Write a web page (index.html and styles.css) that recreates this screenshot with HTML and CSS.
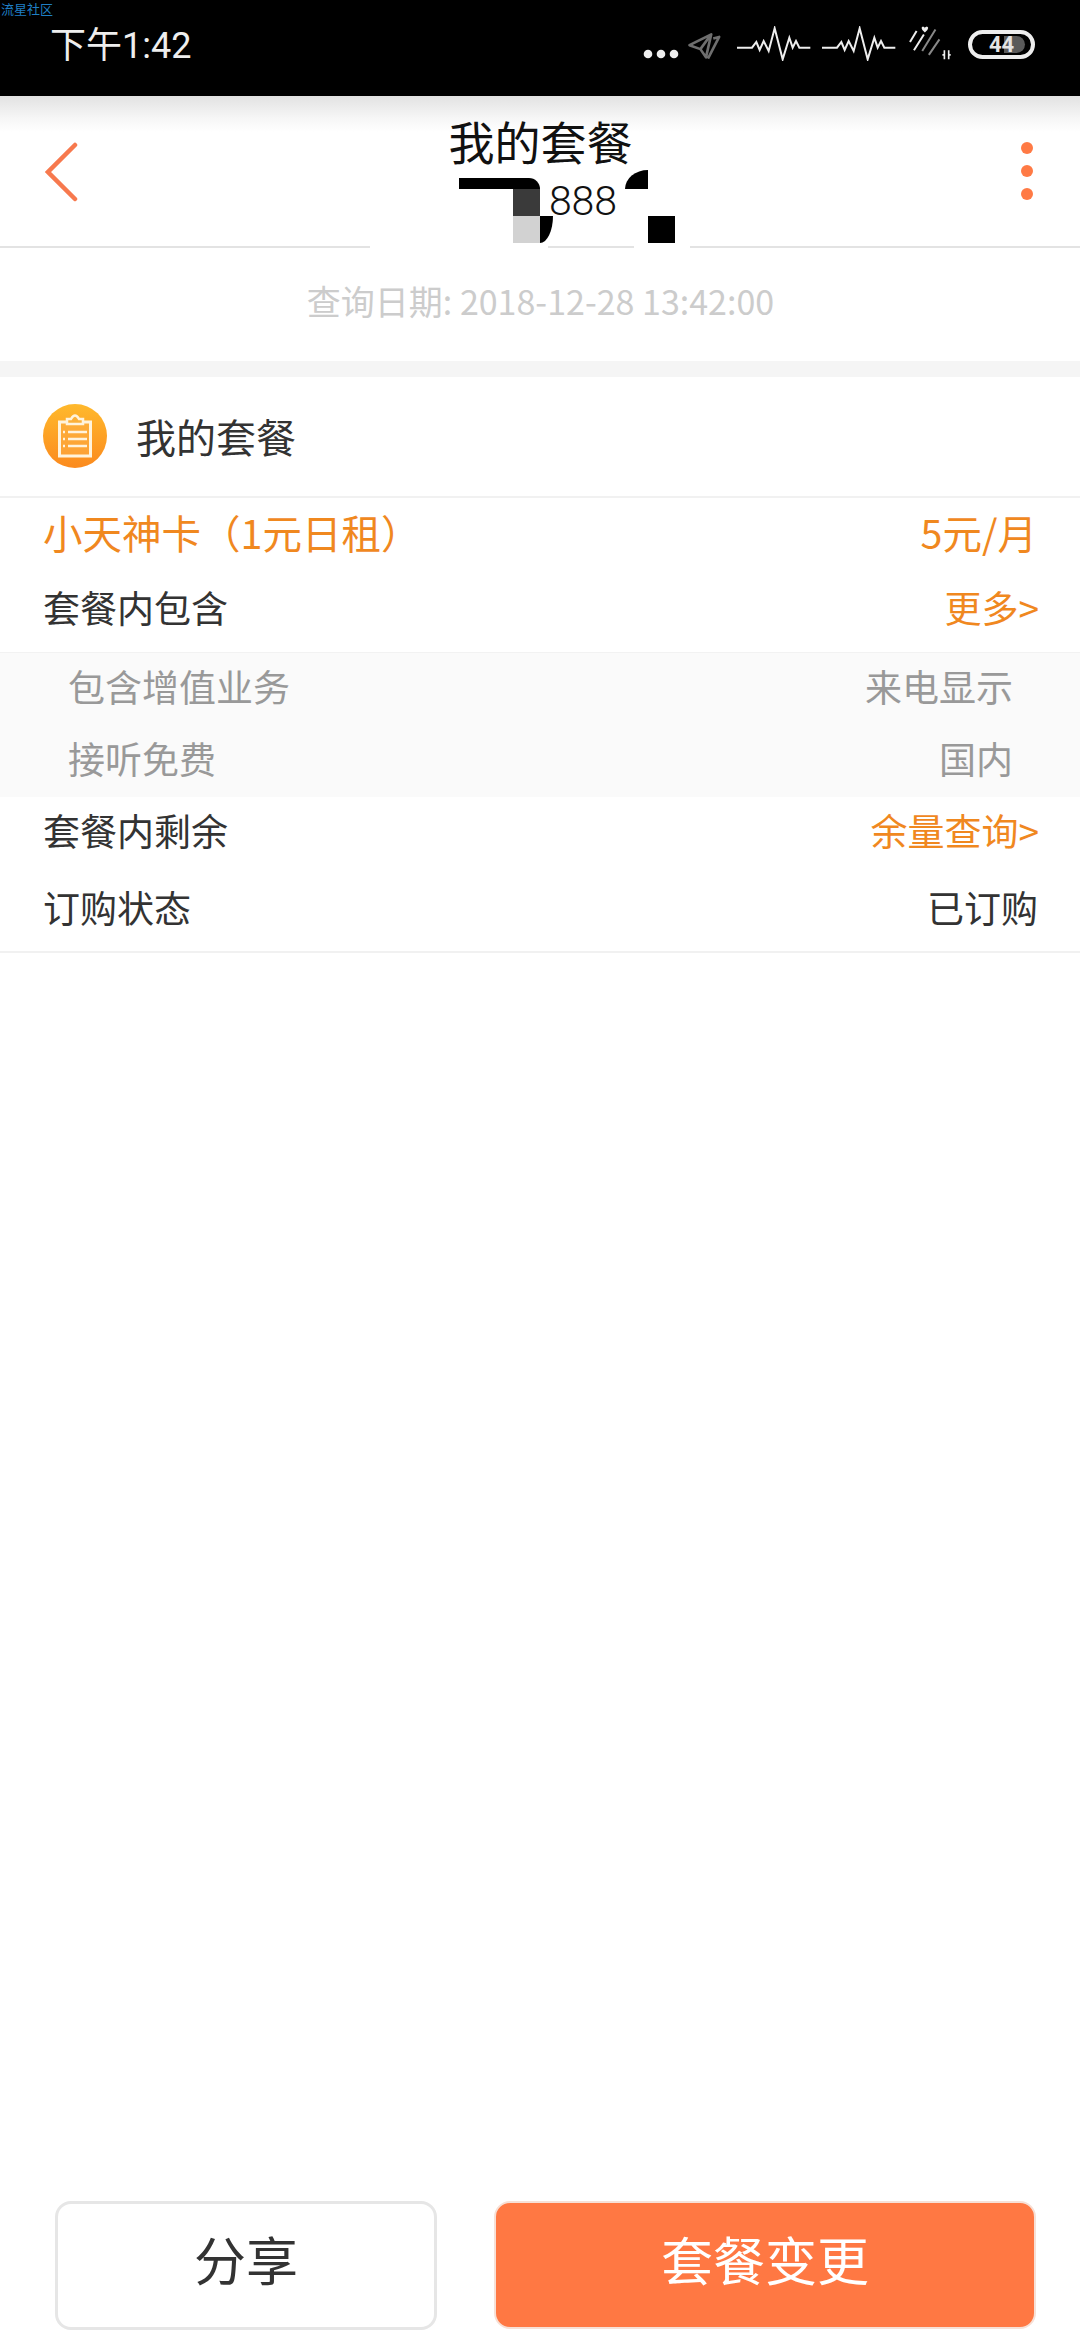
FILE: index.html
```html
<!DOCTYPE html>
<html lang="zh-CN">
<head>
<meta charset="utf-8">
<title>我的套餐</title>
<link rel="stylesheet" href="styles.css">
</head>
<body>
<div class="page">
  <header class="status">
    <span class="watermark">流星社区</span>
    <span class="time">下午1:42</span>
    <div class="status-icons">
      <svg class="i-dots" viewBox="0 0 36 10"><circle cx="5" cy="5" r="4.3"/><circle cx="18" cy="5" r="4.3"/><circle cx="31" cy="5" r="4.3"/></svg>
      <svg class="i-send" viewBox="205 95 105 85"><path d="M212 135L278 102L262 172L245 147Z M245 147L278 102 M284 115L302 110L268 176" fill="none" stroke="#6e6e6e" stroke-width="8" stroke-linejoin="round"/></svg>
      <svg class="i-wave" viewBox="350 80 225 105"><path d="M350 145H395L408 128L418 152L430 125L445 155L463 87L487 180L507 115L517 145L527 125L537 145H570"/></svg>
      <svg class="i-wave" viewBox="350 80 225 105"><path d="M350 145H395L408 128L418 152L430 125L445 155L463 87L487 180L507 115L517 145L527 125L537 145H570"/></svg>
      <svg class="i-signal" viewBox="865 85 130 105"><path d="M868 133L888 100M880 158L910 110" stroke="#eee" stroke-width="6" fill="none"/><path d="M905 160L945 95M925 172L957 125" stroke="#888" stroke-width="6" fill="none"/><path d="M903 91a5 5 0 0 1 10 1a5 5 0 0 1 10-1q0 6-10 13q-10-7-10-13Z" fill="#eee"/><path d="M972 158v27M985 158v27M966 172h6M985 172h6" stroke="#eee" stroke-width="5" fill="none"/></svg>
      <div class="battery"><span class="battery-fill"></span><span class="battery-num">44</span></div>
    </div>
  </header>

  <nav class="nav">
    <svg class="back" viewBox="0 0 34 62"><path d="M30 3L3 30L30 57" fill="none" stroke="#f7794e" stroke-width="4.5" stroke-linecap="round" stroke-linejoin="miter"/></svg>
    <div class="nav-title">
      <div class="nav-name">我的套餐</div>
      <div class="nav-num">888</div>
    </div>
    <div class="more"><i></i><i></i><i></i></div>
    <div class="redact">
      <span class="r-patch"></span>
      <span class="r-patch2"></span>
      <span class="r-bar"></span>
      <span class="r-dark"></span>
      <span class="r-light"></span>
      <span class="r-curve"></span>
      <span class="r-quarter"></span>
      <span class="r-square"></span>
    </div>
  </nav>

  <div class="date">查询日期: 2018-12-28 13:42:00</div>
  <div class="band"></div>

  <section class="sec-head">
    <svg class="sec-icon" viewBox="0 0 64 64">
      <defs><linearGradient id="g" x1="0" y1="0" x2="0" y2="1"><stop offset="0" stop-color="#ffb92c"/><stop offset="1" stop-color="#fb8a1e"/></linearGradient></defs>
      <circle cx="32" cy="32" r="32" fill="url(#g)"/>
      <path d="M16.500 18H47.500V52H16.500Z" fill="#fdb04a" fill-opacity=".5" stroke="#fff3dc" stroke-width="3"/>
      <path d="M24 20V15H28Q32 8 36 15H40V20Z" fill="#fbb03a" stroke="#fff3dc" stroke-width="2.500"/>
      <path d="M25 28H44M25 35H44M25 42H44" stroke="#fff3dc" stroke-width="2.500"/>
      <path d="M20 28h2M20 35h2M20 42h2" stroke="#fff3dc" stroke-width="2.500"/>
    </svg>
    <h2 class="sec-title">我的套餐</h2>
  </section>

  <section class="list">
    <div class="row row-plan orange"><span>小天神卡（1元日租）</span><span>5元/月</span></div>
    <div class="row row-tail"><span>套餐内包含</span><span class="orange">更多&gt;</span></div>
    <div class="sub">
      <div class="sub-row"><span>包含增值业务</span><span>来电显示</span></div>
      <div class="sub-row"><span>接听免费</span><span>国内</span></div>
    </div>
    <div class="row row-rest"><span>套餐内剩余</span><span class="orange">余量查询&gt;</span></div>
    <div class="row row-tail row-last"><span>订购状态</span><span class="status-val">已订购</span></div>
  </section>

  <footer class="actions">
    <button class="btn btn-share">分享</button>
    <button class="btn btn-change">套餐变更</button>
  </footer>
</div>
</body>
</html>
```
FILE: styles.css
```css
* { box-sizing: border-box; }
html, body { margin: 0; padding: 0; background: #fff; }
body { font-family: "Noto Sans CJK SC", "Noto Sans", sans-serif; color: #333; }
.page { width: 1080px; height: 2340px; display: flex; flex-direction: column; overflow: hidden; position: relative; }

.status { height: 96px; background: #000; display: flex; align-items: center; justify-content: space-between; padding: 0 45px 0 50px; position: relative; flex: none; }
.watermark { position: absolute; left: 1px; top: 1px; font-size: 13px; line-height: 15px; color: #1f7fc4; white-space: nowrap; }
.time { font-family: Roboto, "Noto Sans CJK SC", sans-serif; font-size: 36px; line-height: 1; color: #eee; margin-top: -5px; }
.status-icons { display: flex; align-items: flex-end; height: 96px; }
.i-dots { width: 36px; height: 10px; fill: #eee; margin-bottom: 37px; }
.i-send { width: 35px; height: 28px; margin: 0 15px 36px 8px; }
.i-wave { width: 75px; height: 35px; fill: none; stroke: #eee; stroke-width: 6; margin-right: 10px; margin-bottom: 35px; }
.i-signal { width: 43px; height: 35px; margin: 0 16px 35px 2px; }
.battery { width: 67px; height: 29px; border: 4px solid #eee; border-radius: 15px; position: relative; margin-bottom: 37px; overflow: hidden; display: flex; align-items: center; justify-content: center; }
.battery-fill { position: absolute; left: 32px; top: 2px; width: 21px; height: 17px; border-radius: 0 9px 9px 0; background: #5a5a5a; }
.battery-num { position: relative; font-family: Roboto, sans-serif; font-weight: 700; font-size: 22px; line-height: 1; color: #e4e4e4; }

.nav { height: 152px; flex: none; background: linear-gradient(#e2e2e2 0, #f6f6f6 22px, #fff 36px); border-bottom: 2px solid #e3e3e3; position: relative; display: flex; align-items: flex-start; justify-content: space-between; padding-left: 45px; padding-right: 47px; }
.back { width: 34px; height: 62px; margin-top: 46px; }
.nav-title { position: absolute; left: 0; right: 0; top: 17px; text-align: center; color: #111; z-index: 1; }
.nav-name { font-size: 46px; line-height: 54px; padding-left: 1px; }
.nav-num { font-family: Roboto, sans-serif; font-weight: 300; font-size: 41px; line-height: 50px; padding-left: 86px; margin-top: 9px; }
.more { display: flex; flex-direction: column; gap: 11px; margin-top: 46px; }
.more i { display: block; width: 12px; height: 12px; border-radius: 50%; background: #ff7a45; }
.redact { position: absolute; left: 0; top: 0; width: 100%; height: 100%; z-index: 2; pointer-events: none; }
.redact span { position: absolute; display: block; }
.r-patch { left: 370px; top: 150px; width: 178px; height: 2px; background: #fff; }
.r-patch2 { left: 634px; top: 150px; width: 56px; height: 2px; background: #fff; }
.r-bar { left: 459px; top: 82px; width: 81px; height: 11px; background: #000; border-top-right-radius: 24px; }
.r-dark { left: 513px; top: 93px; width: 27px; height: 27px; background: #3a3a3a; }
.r-light { left: 513px; top: 120px; width: 27px; height: 27px; background: #d2d2d2; }
.r-curve { left: 540px; top: 120px; width: 13px; height: 27px; background: #000; border-bottom-right-radius: 13px 27px; }
.r-quarter { left: 625px; top: 74px; width: 23px; height: 19px; background: #000; border-top-left-radius: 23px 19px; }
.r-square { left: 648px; top: 120px; width: 27px; height: 27px; background: #000; }

.date { height: 113px; flex: none; display: flex; align-items: center; justify-content: center; font-size: 34px; color: #ccc; padding-bottom: 8px; padding-left: 1px; }
.band { height: 16px; flex: none; background: #f5f5f5; }

.sec-head { height: 121px; flex: none; border-bottom: 2px solid #f1f1f1; display: flex; align-items: center; padding-left: 43px; gap: 29px; padding-bottom: 1px; }
.sec-icon { width: 64px; height: 64px; flex: none; }
.sec-title { margin: 0; font-size: 40px; font-weight: 400; color: #333; line-height: 1; }

.list { border-bottom: 2px solid #f1f1f1; flex: none; }
.row { display: flex; align-items: center; justify-content: space-between; padding: 0 41px 0 43px; font-size: 37px; line-height: 1; color: #333; }
.row-plan { height: 72px; font-size: 39.5px; padding-right: 43px; padding-bottom: 4px; }
.row-tail { height: 82px; padding-bottom: 7px; }
.row-rest { height: 71px; padding-bottom: 5px; }
.row-last { height: 83px; padding-right: 42px; padding-bottom: 4px; }
.orange { color: #f0881f; }
.status-val { color: #333; }
.sub { background: #fafafa; border-top: 1px solid #f2f2f2; }
.sub-row { height: 72px; display: flex; align-items: center; justify-content: space-between; padding: 0 67px 5px 68px; font-size: 37px; line-height: 1; color: #999; }

.actions { margin-top: auto; height: 140px; flex: none; display: flex; justify-content: space-between; align-items: center; padding: 0 44px 10px 55px; }
.btn { font-family: inherit; font-weight: 400; font-size: 52px; line-height: 1; border-radius: 16px; padding: 0 0 12px; }
.btn-share { width: 382px; height: 129px; background: #fff; border: 3px solid #e6e6e6; color: #333; }
.btn-change { width: 542px; height: 128px; background: #ff7843; border: 2px solid #f7e0d6; color: #fff; }
```
